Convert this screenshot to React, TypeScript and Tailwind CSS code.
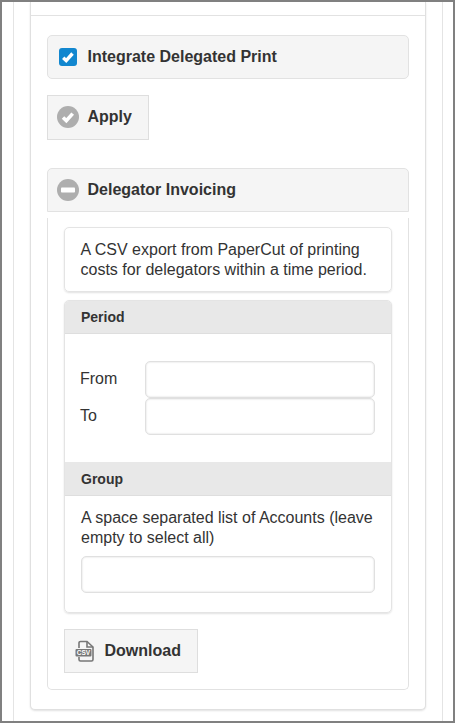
import React from 'react';

const font = { fontFamily: '"Liberation Sans", Arial, sans-serif' };

const TextInput: React.FC<{ className?: string }> = ({ className }) => (
    <input
        type="text"
        className={`block h-[37px] bg-white border border-[#e0e0e0] rounded-[5px] shadow-[inset_0_0_2px_rgba(0,0,0,0.18)] ${className || ''}`}
    />
);

const CardHeader: React.FC<{ title: string; className?: string }> = ({ title, className }) => (
    <div className={`bg-[#e8e8e8] border-b border-[#dedede] pl-4 flex items-center text-[14px] font-bold text-[#333] ${className || ''}`}>
        {title}
    </div>
);

const CheckBoxIcon = () => (
    <svg width="18" height="18" viewBox="0 0 18 18">
        <rect width="18" height="18" rx="3" fill="#1287cf" />
        <path d="M4.200 9.800L7.200 12.600L13.500 5.500" fill="none" stroke="#fff" strokeWidth="3.400" />
    </svg>
);

const CircleCheckIcon = () => (
    <svg width="22" height="22" viewBox="0 0 22 22">
        <circle cx="11" cy="11" r="11" fill="#aeaeae" />
        <path d="M6 11.500L9.300 14.600L15.700 7.600" fill="none" stroke="#fff" strokeWidth="3.600" />
    </svg>
);

const CircleMinusIcon = () => (
    <svg width="22" height="22" viewBox="0 0 22 22">
        <circle cx="11" cy="11" r="11" fill="#aeaeae" />
        <rect x="4" y="8.500" width="14" height="5" rx="0.800" fill="#fff" />
    </svg>
);

const CsvIcon = () => (
    <svg width="20" height="22" viewBox="0 0 20 22" fill="none">
        <path d="M4 8V3a1.500 1.500 0 0 1 1.500-1.500H12L18 7v12.500a1.500 1.500 0 0 1-1.500 1.500h-11A1.500 1.500 0 0 1 4 19.500V17" stroke="#777" strokeWidth="1.600" />
        <path d="M12 1.500V7h6" stroke="#777" strokeWidth="1.600" />
        <rect x="0.500" y="9" width="16" height="7.500" rx="1" fill="#777" />
        <text x="8.500" y="15" textAnchor="middle" fontSize="6.500" fontWeight="700" fill="#fff" style={font}>CSV</text>
    </svg>
);

const App: React.FC = () => {
    return (
        <div className="w-[455px] h-[723px] overflow-hidden bg-white border-2 border-[#808080] text-[#333]" style={font}>
            <div className="ml-[11px] mr-[10px] h-full border-x border-[#e4e4e4] px-4">
                <div className="h-[708px] bg-white border border-t-0 border-[#e0e0e0] rounded-b-[5px] shadow-[0_1px_2px_rgba(0,0,0,0.12)]">
                    <div className="h-[14px] border-b border-[#e2e2e2]" />
                    <div className="px-4 pt-[19px]">
                        <div className="h-[44px] bg-[#f5f5f5] border border-[#e2e2e2] rounded-[5px] flex items-center pl-[11px] gap-[10.5px]">
                            <CheckBoxIcon />
                            <span className="text-[16px] font-bold">Integrate Delegated Print</span>
                        </div>

                        <button className="mt-4 h-[45px] w-[102px] bg-[#f5f5f5] border border-[#dedede] flex items-center pl-[9px] gap-[8.5px] pb-[1px]">
                            <CircleCheckIcon />
                            <span className="text-[16px] font-bold">Apply</span>
                        </button>

                        <div className="mt-7 h-[44px] bg-[#f5f5f5] border border-[#e2e2e2] rounded-t-[5px] flex items-center pl-[9px] gap-[8.5px]">
                            <CircleMinusIcon />
                            <span className="text-[16px] font-bold">Delegator Invoicing</span>
                        </div>

                        <div className="h-[6px]" />
                        <div className="h-[472px] border border-t-0 border-[#e2e2e2] rounded-b-[5px] px-4 pt-[9px]">
                            <div className="h-[65px] border border-[#e4e4e4] rounded-[5px] shadow-[0_1px_2px_rgba(0,0,0,0.12)] pl-[15.5px] pr-4 pt-[12px] text-[16px] leading-[20px]">
                                A CSV export from PaperCut of printing costs for delegators within a time period.
                            </div>

                            <div className="mt-2 h-[313px] border border-[#e4e4e4] rounded-[5px] shadow-[0_1px_2px_rgba(0,0,0,0.12)] overflow-hidden">
                                <CardHeader title="Period" className="h-[33px]" />
                                <div className="h-[128px] pl-[15px] pr-4 pt-[27px]">
                                    <div className="flex items-center">
                                        <span className="w-[65px] text-[16px] pb-[2px]">From</span>
                                        <TextInput className="w-[230px]" />
                                    </div>
                                    <div className="flex items-center">
                                        <span className="w-[65px] text-[16px] pb-[2px]">To</span>
                                        <TextInput className="w-[230px]" />
                                    </div>
                                </div>
                                <CardHeader title="Group" className="h-[34px] pt-[1px]" />
                                <div className="pl-4 pr-4 pt-3">
                                    <div className="text-[16px] leading-[20px]">A space separated list of Accounts (leave empty to select all)</div>
                                    <TextInput className="w-[294px] mt-[8px]" />
                                </div>
                            </div>

                            <button className="mt-4 h-[44px] w-[134px] bg-[#f5f5f5] border border-[#dedede] flex items-center pl-[10px] gap-[9.5px]">
                                <CsvIcon />
                                <span className="text-[16px] font-bold">Download</span>
                            </button>
                        </div>
                    </div>
                </div>
            </div>
        </div>
    );
};

export default App;
